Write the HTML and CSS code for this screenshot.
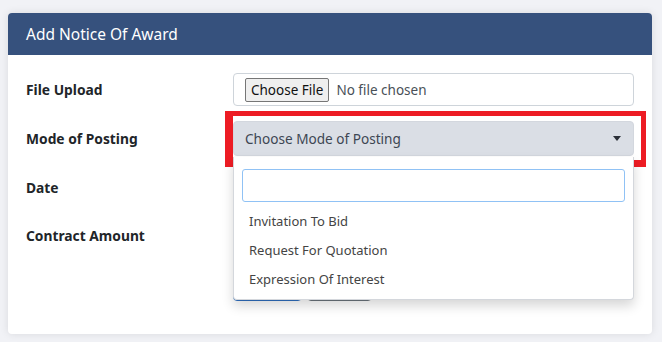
FILE: index.html
```html
<!DOCTYPE html>
<html>
  <head>
    <title>Add Notice Of Award</title>
    <link rel="stylesheet" href="styles.css">
  </head>
  <body>
    <div class="page">
      <div class="card">
        <div class="card-head">Add Notice Of Award</div>
        <div class="card-body">
          <div class="form-grid">
            <label class="lbl">File Upload</label>
            <div class="file-box">
              <span class="file-btn">Choose File</span>
              <span class="file-name">No file chosen</span>
            </div>

            <label class="lbl">Mode of Posting</label>
            <div class="select-wrap">
              <div class="select">
                <span>Choose Mode of Posting</span>
                <span class="caret"></span>
              </div>
              <div class="mark"></div>
              <div class="dropdown">
                <div class="search-row"><input type="text" class="search"></div>
                <ul class="options">
                  <li>Invitation To Bid</li>
                  <li>Request For Quotation</li>
                  <li>Expression Of Interest</li>
                </ul>
              </div>
            </div>

            <label class="lbl">Date</label>
            <input type="text" class="field">

            <label class="lbl">Contract Amount</label>
            <input type="text" class="field">

            <span></span>
            <!-- buttons sit under the open dropdown -->
            <div class="actions">
              <button class="btn btn-primary"></button>
              <button class="btn btn-plain"></button>
            </div>
          </div>
        </div>
      </div>
    </div>
  </body>
</html>
```

FILE: styles.css
```css
body {margin: 0; background-color: #f1f2f6; font-family: "Noto Sans", sans-serif; color: #212529;}
.page {padding: 13px 10px 9px 8px;}
.card {background-color: #fff; border-radius: 4px; box-shadow: 0 0 8px rgba(0,0,0,0.10);}
.card-head {background-color: #36517d; color: #fff; height: 42px; line-height: 42px; padding-left: 18px; font-size: 15.5px; border-radius: 4px 4px 0 0;}
.card-body {padding: 18px 18px 33px 18px;}

.form-grid {display: grid; grid-template-columns: 207px 401px; row-gap: 15px; align-items: center;}
.lbl {font-weight: bold; font-size: 13.8px; color: #212529;}

.file-box {height: 33px; box-sizing: border-box; border: 1px solid #ced4da; border-radius: 4px; display: flex; align-items: center; padding-left: 11px; font-size: 13.5px;}
.file-btn {background-color: #efefef; border: 1px solid #767676; border-radius: 2px; padding: 0 5px; height: 24px; line-height: 23px; box-sizing: border-box; color: #111;}
.file-name {margin-left: 7px; color: #495057;}

.select-wrap {position: relative;}
.select {height: 35px; box-sizing: border-box; background-color: #dadee5; border: 1px solid #d3d7de; border-radius: 4px; display: flex; align-items: center; justify-content: space-between; padding: 0 12px 0 11px; font-size: 13.6px; color: #3d4653;}
.caret {width: 0; height: 0; border-left: 4.5px solid transparent; border-right: 4.5px solid transparent; border-top: 5px solid #2b3038;}
.mark {position: absolute; left: -8px; top: -10px; right: -12px; bottom: -11px; border: 5px solid #ed1c24; border-left-width: 8px; border-bottom-width: 7px; pointer-events: none;}

.dropdown {position: absolute; left: 0; right: 0; top: 36px; background-color: #fff; border: 1px solid #d4d7dc; border-top: none; border-radius: 0 0 4px 4px; box-shadow: 0 6px 12px rgba(0,0,0,0.16); z-index: 2;}
.search-row {padding: 12px 8px 5px 8px;}
.search {width: 100%; box-sizing: border-box; height: 33px; border: 1px solid #90c2f5; border-radius: 3px; outline: none;}
.options {list-style: none; margin: 0; padding: 0 0 5px 0;}
.options li {height: 29px; line-height: 29px; padding-left: 15px; font-size: 13px; color: #444;}

.field {height: 33px; box-sizing: border-box; border: 1px solid #ced4da; border-radius: 4px;}
.actions {display: flex; gap: 5px;}
.btn {height: 34px; border-radius: 4px; background-color: #fff;}
.btn-primary {width: 69px; border: 1px solid #2f6fc0;}
.btn-plain {width: 65px; border: 1px solid #6c757d;}
```
